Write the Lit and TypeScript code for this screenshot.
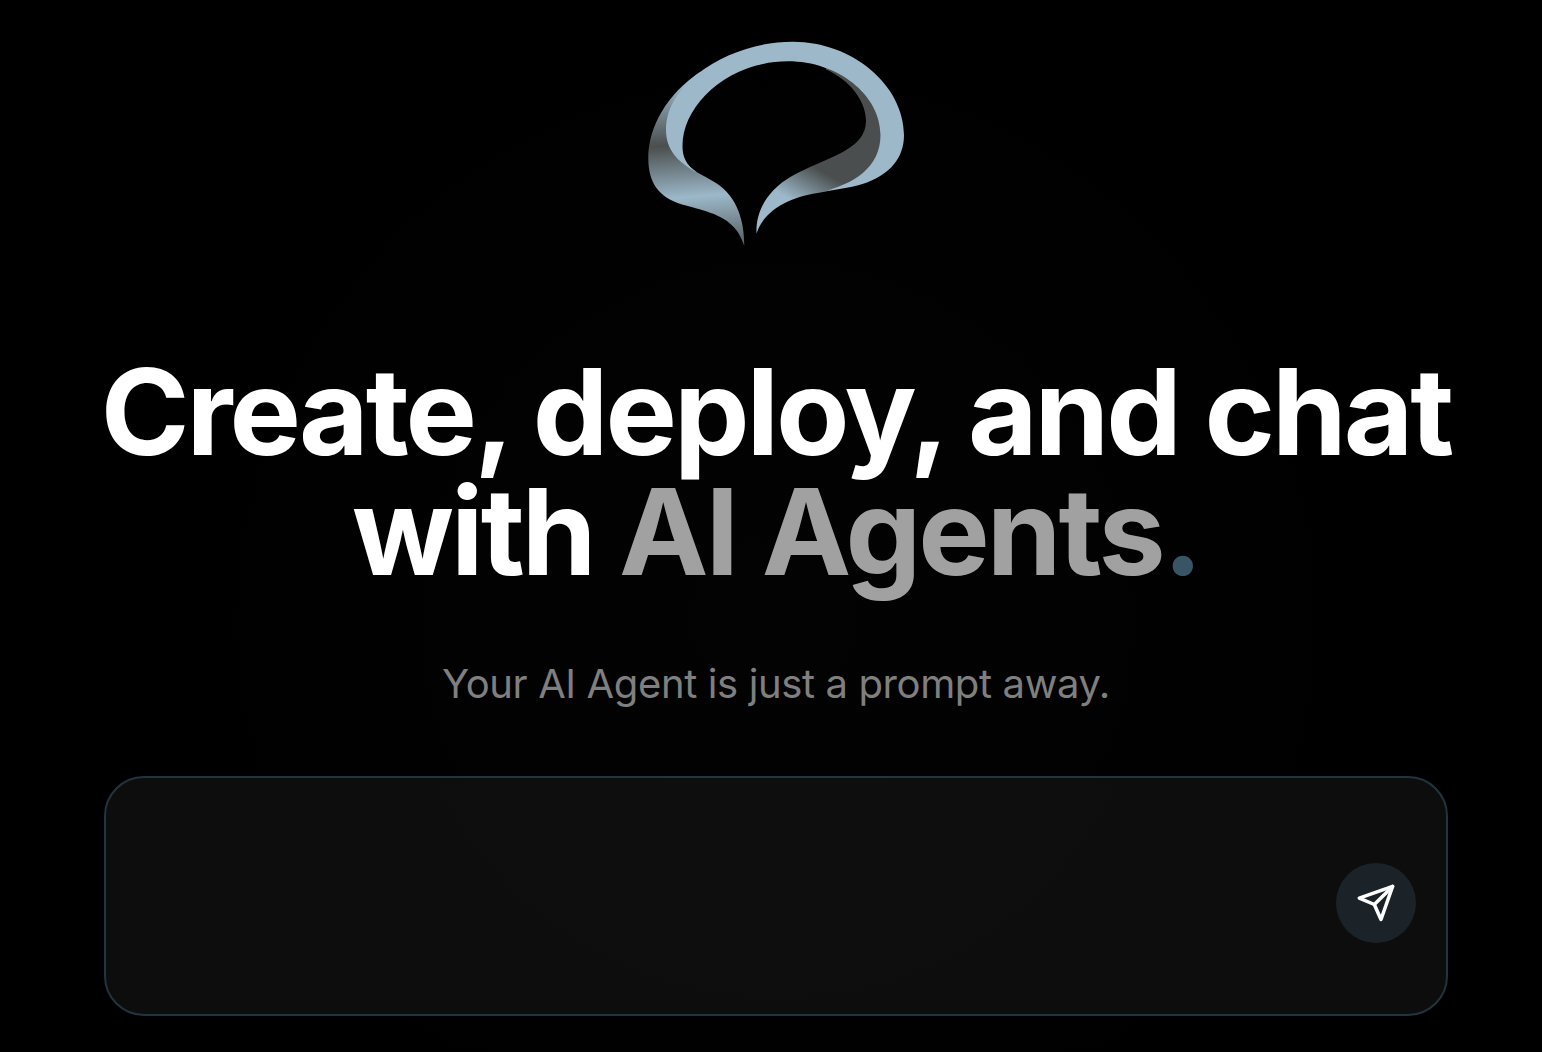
import { LitElement, html, css } from "lit";
import { customElement } from "lit/decorators.js";

@customElement("brand-mark")
class BrandMark extends LitElement {
  static styles = css`
    :host { display: block; width: 272px; height: 216px; }
    svg { display: block; width: 100%; height: 100%; }
  `;
  render() {
    return html`
      <svg viewBox="640 36 272 216" aria-hidden="true">
        <defs>
          <linearGradient id="left" gradientUnits="userSpaceOnUse" x1="688" y1="82" x2="702" y2="258">
            <stop offset="0" stop-color="#9cb8c9" />
            <stop offset="0.35" stop-color="#4a4e4e" />
            <stop offset="0.65" stop-color="#9cb8c9" />
            <stop offset="1" stop-color="#4a4e4e" />
          </linearGradient>
          <linearGradient id="right" gradientUnits="userSpaceOnUse" x1="827" y1="174" x2="807" y2="209">
            <stop offset="0" stop-color="#4a4e4e" />
            <stop offset="1" stop-color="#9cb8c9" />
          </linearGradient>
        </defs>
        <path fill="url(#left)" d="M700 72C667 94 648.300 127 648.300 158C648.300 182 658 197 682 204.500C704 210.500 715 213 727 221C738 229.500 741 237 744.300 246C744.300 222 738 197 716 183C709 178.500 703 175.500 697 172.200L680 159L672 135Z" />
        <path fill="url(#right)" d="M826 69.500C850 80 866 101 866 121C866 151 824 158 792 176C767 190 755.500 212 756.500 233.500C765 208 793 196 822 192.200C856 184 886 168 886 135C886 104 860 80 826 67Z" />
        <path fill="#9cb8c9" d="M793 41.800C853 41.800 904 86 904 135C904 159 889 174 867 182.500C853 187.500 838 189 822 192C853 184 880.500 168 880.500 135C880.500 95 838 61.300 788 61.300C729 61.300 682.500 104 682.500 146C682.500 157 686 165 697 172.500C677 162 666 149 666 130C666 110 676 92 697 74.300C725 53 758 41.800 793 41.800Z" />
      </svg>
    `;
  }
}

@customElement("prompt-box")
class PromptBox extends LitElement {
  static styles = css`
    :host { display: block; }
    .box {
      box-sizing: border-box;
      display: flex;
      align-items: center;
      height: 240px;
      padding: 14px 30px 0 30px;
      border: 2px solid #22343d;
      border-radius: 40px;
      background: rgba(255, 255, 255, 0.05);
    }
    .field {
      flex: 1;
      height: 180px;
      padding: 0;
      border: 0;
      outline: 0;
      resize: none;
      background: transparent;
      color: #fff;
      font: 32px/44px Inter, sans-serif;
    }
    .send {
      display: flex;
      align-items: center;
      justify-content: center;
      width: 80px;
      height: 80px;
      padding: 0;
      border: 0;
      border-radius: 50%;
      background: #1b2328;
    }
    svg { display: block; }
  `;
  render() {
    return html`
      <div class="box">
        <textarea class="field" aria-label="Prompt"></textarea>
        <button class="send" aria-label="Send">
          <svg width="40" height="40" viewBox="0 0 40 40" fill="none" stroke="#fff" stroke-width="3.500" stroke-linejoin="round" stroke-linecap="round">
            <path d="M36.600 3.400L3.300 15.100L18.300 21.500L25 36.500Z" />
            <path d="M18.300 21.500L36.600 3.400" />
          </svg>
        </button>
      </div>
    `;
  }
}

@customElement("app-root")
class AppRoot extends LitElement {
  static styles = css`
    :host { display: block; }
    .page {
      box-sizing: border-box;
      display: flex;
      flex-direction: column;
      align-items: center;
      width: 1542px;
      height: 1052px;
      padding: 36px 94px 0 104px;
      overflow: hidden;
      background: radial-gradient(circle at 776px 620px, #030303 0, #020202 260px, #010101 430px, #000 560px);
      font-family: Inter, sans-serif;
    }
    .title {
      margin: 100px 0 0;
      font-size: 120px;
      line-height: 120px;
      font-weight: 700;
      letter-spacing: -0.025em;
      text-align: center;
      white-space: nowrap;
      color: #fff;
    }
    .muted { color: #a1a1a1; }
    .dot { color: #385565; }
    .sub {
      margin: 64px 0 0;
      font-size: 40px;
      line-height: 56px;
      letter-spacing: -0.38px;
      color: #7f7f7f;
      white-space: nowrap;
    }
    prompt-box { width: 1344px; margin-top: 64px; }
  `;
  render() {
    return html`
      <main class="page">
        <brand-mark></brand-mark>
        <h1 class="title">Create, deploy, and chat<br />with <span class="muted">AI Agents</span><span class="dot">.</span></h1>
        <p class="sub">Your AI Agent is just a prompt away.</p>
        <prompt-box></prompt-box>
      </main>
    `;
  }
}
